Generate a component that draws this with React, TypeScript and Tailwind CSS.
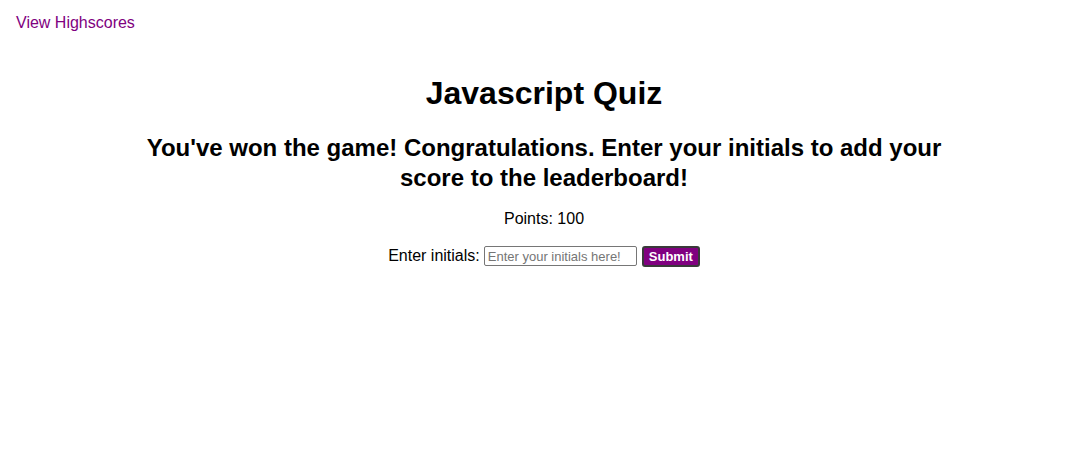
export default function App() {
  return (
    <div className="min-h-[471px] bg-white text-black font-['Liberation_Sans',Arial,sans-serif]">
      <header className="px-4 pt-[11px]">
        <a href="#" className="text-[16px] text-[#800080] leading-[18px]">
          View Highscores
        </a>
      </header>
      <main className="mx-auto max-w-[810px] text-center">
        <h1 className="mt-[40px] text-[32px] font-bold leading-[37px]">Javascript Quiz</h1>
        <h2 className="mt-[21px] text-[24px] font-bold leading-[30px]">
          You've won the game! Congratulations. Enter your initials to add your score to the
          leaderboard!
        </h2>
        <p className="mt-[17px] text-[16px] leading-[18px]">Points: 100</p>
        <form className="mt-[16px] flex items-center justify-center gap-[4px] text-[16px]">
          <label htmlFor="initials">Enter initials:</label>
          <input
            id="initials"
            type="text"
            placeholder="Enter your initials here!"
            className="h-[20px] w-[153px] border border-[#767676] px-[3px] text-[13px] placeholder:text-[#757575] rounded-[2px]"
          />
          <button
            type="submit"
            className="ml-[1px] h-[21px] rounded-[3px] border-2 border-[#3a3a3a] bg-[#800080] px-[5px] text-[13px] font-bold leading-[15px] text-white"
          >
            Submit
          </button>
        </form>
      </main>
    </div>
  );
}
